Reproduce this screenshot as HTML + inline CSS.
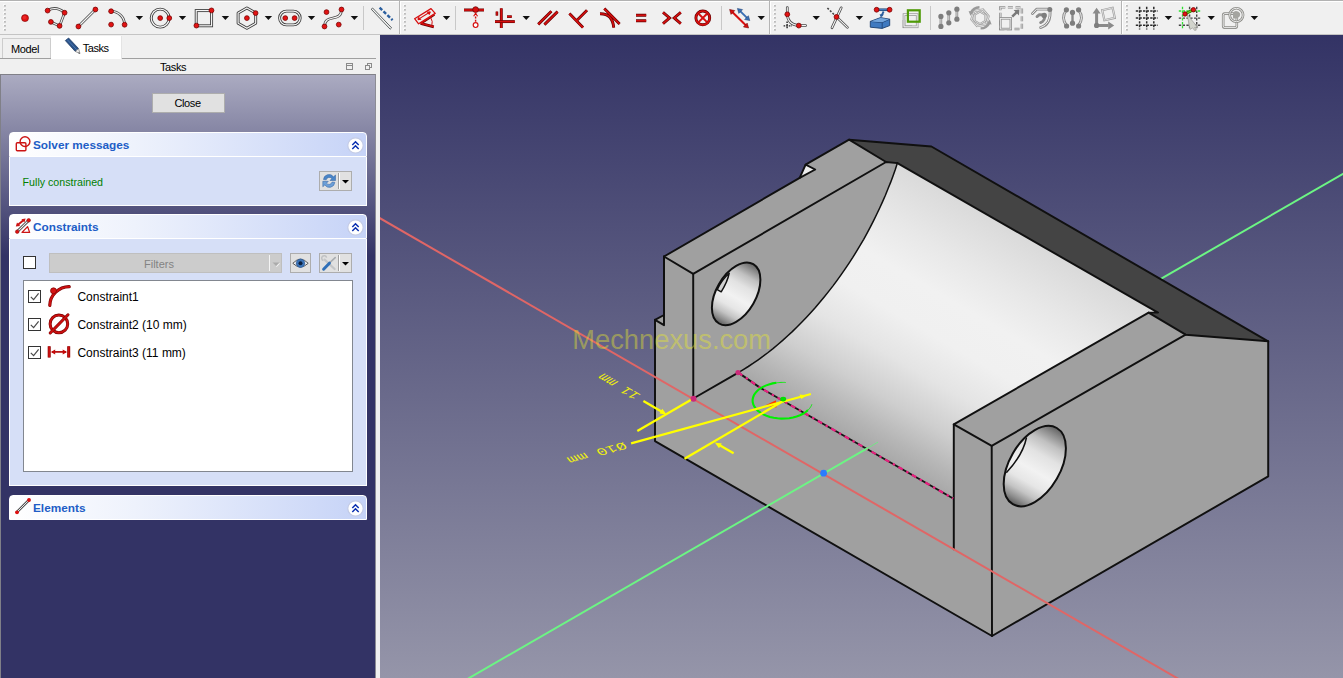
<!DOCTYPE html>
<html><head><meta charset="utf-8"><title>FreeCAD Sketcher</title>
<style>
html,body{margin:0;padding:0}
body{width:1343px;height:678px;overflow:hidden;background:#f0f0f0;position:relative;font-family:"Liberation Sans",sans-serif;font-size:11px;color:#000}
</style></head><body>

<svg id="view" width="963" height="643" viewBox="380 35 963 643" style="position:absolute;left:380px;top:35px;display:block">
<defs>
<linearGradient id="bg" x1="0" y1="35" x2="0" y2="678" gradientUnits="userSpaceOnUse">
<stop offset="0" stop-color="#333365"/><stop offset="1" stop-color="#9595a9"/></linearGradient>
<linearGradient id="cyl" x1="738" y1="372.5" x2="870" y2="147.1" gradientUnits="userSpaceOnUse">
<stop offset="0" stop-color="#a8a8a8"/><stop offset="0.08" stop-color="#b6b6b6"/><stop offset="0.2" stop-color="#cecece"/>
<stop offset="0.35" stop-color="#e4e4e4"/><stop offset="0.5" stop-color="#f0f0f0"/><stop offset="0.65" stop-color="#f1f1f1"/>
<stop offset="0.8" stop-color="#e8e8e8"/><stop offset="1" stop-color="#dadada"/></linearGradient>
<linearGradient id="hg" x1="0" y1="0" x2="1" y2="0">
<stop offset="0" stop-color="#626262"/><stop offset="0.08" stop-color="#8a8a8a"/><stop offset="0.2" stop-color="#c0c0c0"/>
<stop offset="0.35" stop-color="#e2e2e2"/><stop offset="0.55" stop-color="#f2f2f2"/><stop offset="0.7" stop-color="#e6e6e6"/>
<stop offset="0.82" stop-color="#c4c4c4"/><stop offset="0.92" stop-color="#8e8e8e"/><stop offset="1" stop-color="#5a5a5a"/></linearGradient>
</defs>
<rect x="380" y="35" width="963" height="643" fill="url(#bg)"/>
<line x1="1150" y1="285.2" x2="1345" y2="172.7" stroke="#6cf584" stroke-width="2"/>
<polygon points="655.0,319.8 655.0,441.1 992.0,636.0 1268.2,476.4 1268.2,341.3 931.4,146.5 849.1,139.7 805.6,164.7 799.7,177.8 664.0,256.5 664.0,315.0" fill="#a0a0a0"/>
<polygon points="849.1,139.7 931.4,146.5 1268.2,341.3 1185.6,334.7 1148.6,312.6 1158.0,312.6 897.4,163.1 886.1,162.0" fill="#444444"/>
<polygon points="897.4,163.1 895.3,169.5 893.0,176.0 890.6,182.4 888.0,188.8 885.4,195.2 882.6,201.6 879.7,208.0 876.7,214.3 873.6,220.6 870.4,226.9 867.1,233.1 863.7,239.3 860.1,245.4 856.5,251.4 852.8,257.4 848.9,263.3 845.0,269.1 841.0,274.9 836.9,280.6 832.8,286.1 828.5,291.6 824.2,297.0 819.8,302.3 815.4,307.5 810.9,312.5 806.3,317.5 801.7,322.3 797.0,327.0 792.3,331.6 787.5,336.0 782.7,340.4 777.9,344.5 773.0,348.6 768.1,352.5 763.2,356.2 758.2,359.8 753.3,363.2 748.3,366.5 743.3,369.6 738.3,372.6 760.0,387.6 953.2,498.5 953.8,424.4 1148.6,312.6 1158.0,312.6" fill="url(#cyl)"/>
<polygon points="805.6,164.7 815.2,169.5 799.7,177.8" fill="#ededed"/>
<ellipse cx="0" cy="0" rx="34.3" ry="19.8" transform="translate(736.15 293.8) rotate(120)" fill="url(#hg)" stroke="#101010" stroke-width="2"/>
<ellipse cx="0" cy="0" rx="44.0" ry="25.4" transform="translate(1034.8 466.1) rotate(120)" fill="url(#hg)" stroke="#101010" stroke-width="2"/>
<path d="M729.2,273.2 Q727.5,282 721.2,291.8 L717.2,289.6 Q721.5,280 729.2,273.2 Z" fill="#d2d2d2" stroke="#101010" stroke-width="1.5" stroke-linejoin="round"/>
<path d="M1026.5,437.5 Q1023,455 1006.3,472.7" fill="none" stroke="#101010" stroke-width="1.5"/>
<polygon points="655.0,319.8 655.0,441.1 992.0,636.0 1268.2,476.4 1268.2,341.3 931.4,146.5 849.1,139.7 805.6,164.7 799.7,177.8 664.0,256.5 664.0,315.0" fill="none" stroke="#101010" stroke-width="1.95" stroke-linejoin="round" stroke-linecap="round"/>
<polyline points="664.0,256.5 664.0,325.2 655.0,319.8" fill="none" stroke="#101010" stroke-width="1.95" stroke-linejoin="round" stroke-linecap="round"/>
<polyline points="805.6,164.7 815.2,169.5 799.7,177.8" fill="none" stroke="#101010" stroke-width="1.95" stroke-linejoin="round" stroke-linecap="round"/>
<polyline points="664.0,256.5 693.2,273.8 886.1,162.0 897.4,163.1" fill="none" stroke="#101010" stroke-width="1.95" stroke-linejoin="round" stroke-linecap="round"/>
<polyline points="849.1,139.7 886.1,162.0" fill="none" stroke="#101010" stroke-width="1.95" stroke-linejoin="round" stroke-linecap="round"/>
<polyline points="693.2,273.8 693.3,398.5 738.3,372.6" fill="none" stroke="#101010" stroke-width="1.95" stroke-linejoin="round" stroke-linecap="round"/>
<polyline points="897.4,163.1 895.3,169.5 893.0,176.0 890.6,182.4 888.0,188.8 885.4,195.2 882.6,201.6 879.7,208.0 876.7,214.3 873.6,220.6 870.4,226.9 867.1,233.1 863.7,239.3 860.1,245.4 856.5,251.4 852.8,257.4 848.9,263.3 845.0,269.1 841.0,274.9 836.9,280.6 832.8,286.1 828.5,291.6 824.2,297.0 819.8,302.3 815.4,307.5 810.9,312.5 806.3,317.5 801.7,322.3 797.0,327.0 792.3,331.6 787.5,336.0 782.7,340.4 777.9,344.5 773.0,348.6 768.1,352.5 763.2,356.2 758.2,359.8 753.3,363.2 748.3,366.5 743.3,369.6 738.3,372.6" fill="none" stroke="#101010" stroke-width="1.5" stroke-linejoin="round" stroke-linecap="round"/>
<polyline points="897.4,163.1 1158.0,312.6 1148.6,312.6 1185.6,334.7 1268.2,341.3" fill="none" stroke="#101010" stroke-width="1.95" stroke-linejoin="round" stroke-linecap="round"/>
<polyline points="1148.6,312.6 953.8,424.4 991.7,445.9 1185.6,334.7" fill="none" stroke="#101010" stroke-width="1.95" stroke-linejoin="round" stroke-linecap="round"/>
<polyline points="953.8,424.4 953.8,549.3" fill="none" stroke="#101010" stroke-width="1.95" stroke-linejoin="round" stroke-linecap="round"/>
<polyline points="991.7,445.9 992.0,636.0" fill="none" stroke="#101010" stroke-width="1.95" stroke-linejoin="round" stroke-linecap="round"/>
<polyline points="738.3,372.6 760.0,387.6 953.2,498.5" fill="none" stroke="#141414" stroke-width="1.9"/>
<polyline points="738.3,372.6 760.0,387.6 953.2,498.5" fill="none" stroke="#e8207e" stroke-width="2.2" stroke-dasharray="5 4 2.5 4"/>
<line x1="378" y1="217.1" x2="1180" y2="679.8" stroke="#e06666" stroke-width="2"/>
<line x1="465" y1="680.4" x2="868" y2="447.9" stroke="#6cf584" stroke-width="2"/>
<line x1="868" y1="447.9" x2="878" y2="442.1" stroke="#66f27c" stroke-width="0.8"/>
<path d="M776.4,382.8 L772.6,383.4 L768.9,384.4 L765.6,385.6 L762.5,387.1 L759.7,388.8 L757.4,390.7 L755.5,392.8 L754.0,395.0 L753.1,397.3 L752.6,399.7 L752.7,402.0 L753.3,404.4 L754.4,406.7 L756.0,408.8 L758.0,410.9 L760.5,412.7 L763.3,414.4 L766.5,415.8 L770.0,416.9 L773.7,417.8 L777.5,418.3 L781.4,418.6 L785.4,418.5 L789.2,418.2 L793.0,417.5 L796.6,416.5 L800.0,415.3 L803.0,413.8 L805.7,412.0 L808.0,410.1" fill="none" stroke="#00f000" stroke-width="2.1"/>
<path d="M785.7,382.5 L784.6,382.4 L783.4,382.4 L782.2,382.4 L781.0,382.4 L779.9,382.5 L778.7,382.6 L777.5,382.7 L776.4,382.8 M808.0,410.1 L808.7,409.4 L809.3,408.7 L809.9,408.0 L810.4,407.3 L810.9,406.5 L811.3,405.8 L811.6,405.0 L811.9,404.3" fill="none" stroke="#00f000" stroke-width="0.9"/>
<polygon points="765,405.6 776,400.2 776.5,407.6" fill="#ff3a00"/>
<line x1="637.3" y1="431" x2="693.3" y2="398.5" stroke="#ffff00" stroke-width="2.3" stroke-linecap="butt" fill="none"/>
<line x1="684.5" y1="458.7" x2="784.5" y2="400.3" stroke="#ffff00" stroke-width="2.3" stroke-linecap="butt" fill="none"/>
<line x1="631.1" y1="443.3" x2="810.9" y2="394" stroke="#ffff00" stroke-width="2.3" stroke-linecap="butt" fill="none"/>
<line x1="643.4" y1="401" x2="664" y2="413.1" stroke="#ffff00" stroke-width="2.3" stroke-linecap="butt" fill="none"/>
<polygon points="666.5,414.6 659.5,413.4 662.3,408.8" fill="#ffff00"/>
<line x1="733.6" y1="453.2" x2="718" y2="444.2" stroke="#ffff00" stroke-width="2.3" stroke-linecap="butt" fill="none"/>
<polygon points="714.8,442.4 721.8,443.6 719,448.2" fill="#ffff00"/>
<polygon points="806.8,395.2 799.4,394.6 801.4,399" fill="#ffff00"/>
<circle cx="693.5" cy="398.8" r="3" fill="#cc2a7a"/>
<circle cx="738" cy="372.6" r="2.6" fill="#cc2a7a"/>
<ellipse cx="783.2" cy="399.1" rx="3" ry="2.3" fill="#00e000"/>
<circle cx="823.6" cy="473.2" r="3.4" fill="#2a7cff"/>
<text transform="matrix(-0.866 -0.5 0.866 -0.5 641.5 395)" font-family="Liberation Mono, monospace" font-size="14.5" fill="#ffff00" fill-opacity="0.88">11 mm</text>
<text transform="matrix(-1.1064 0.3033 -0.5254 -0.6388 623.5 442)" font-family="Liberation Mono, monospace" font-size="14.5" fill="#ffff00" fill-opacity="0.88">Ø10 mm</text>
<text x="572.3" y="348.8" font-family="Liberation Sans, sans-serif" font-size="27.3" fill="#eaea2c" fill-opacity="0.43">Mechnexus.com</text>
</svg>
<style>
#tabs{position:absolute;left:0;top:35px;width:380px;height:24px;background:#f0f0f0}
#tabs .line{position:absolute;left:0;top:23px;width:376px;height:1px;background:#a0a0a0}
#tab-model{position:absolute;left:2px;top:3px;width:47px;height:19px;border:1px solid #cdcdcd;border-bottom:none;background:#f0f0f0;box-sizing:content-box}
#tab-model span{position:absolute;left:8px;top:3.5px;font-size:11px;line-height:13px;letter-spacing:-0.4px}
#tab-tasks{position:absolute;left:51px;top:1px;width:71px;height:23px;background:#ffffff;border-right:1px solid #e4e4e4;box-sizing:border-box}
#tab-tasks span{position:absolute;left:31.8px;top:6px;font-size:11px;line-height:13px;letter-spacing:-0.5px}
#dock-title{position:absolute;left:0;top:59px;width:376px;height:15px;background:#f0f0f0}
#dock-title span{position:absolute;left:160px;top:1.5px;font-size:11px;line-height:13px;letter-spacing:-0.4px}
#panel{position:absolute;left:0;top:74px;width:376px;height:604px;box-sizing:border-box;border:1px solid #808088;border-bottom:none;border-right-color:#8c8c94;
 background:linear-gradient(to bottom, rgb(171,171,193) 0px, rgb(51,51,101) 181px, rgb(51,51,101) 100%)}
.btn{position:absolute;box-sizing:border-box;border:1px solid #adadad;background:#e1e1e1}
.hdr{position:absolute;left:9px;width:358px;height:25px;box-sizing:border-box;border:1px solid #fff;border-radius:4px 4px 0 0;background:linear-gradient(to right,#ffffff 0%,#eef2fc 35%,#c6d3f7 100%)}
.hdr b{position:absolute;left:23px;top:5px;font-size:11.8px;line-height:14px;color:#215dc6;font-weight:bold;white-space:nowrap}
.hdr .col{position:absolute;left:337px;top:3.5px;width:17px;height:17px}
.bodyb{position:absolute;left:9px;width:358px;box-sizing:border-box;border:1px solid #fff;border-top:none;background:#d6dff7}
.chk{position:absolute;width:13px;height:13px;box-sizing:border-box;border:1px solid #333;background:#fff}
.li{position:absolute;left:77.4px;font-size:12px;line-height:14px;white-space:nowrap}
</style>
<div id="tabs"><div class="line"></div>
 <div id="tab-model"><span>Model</span></div>
 <div id="tab-tasks">
  <svg width="20" height="20" viewBox="62 36 20 20" style="position:absolute;left:11px;top:0px"><g>
   <path d="M65.3,40.6 L68.6,38 L78.6,48.6 L75.2,51.4 Z" fill="#2a5288" stroke="#1a3760" stroke-width="0.7"/>
   <path d="M67,39.4 L77,50" stroke="#4a78b4" stroke-width="1" fill="none"/>
   <path d="M75.2,51.4 L78.6,48.6 L80,53.6 Z" fill="#ececec" stroke="#666" stroke-width="0.6"/>
   <path d="M78.9,52.2 L80,53.6 L78.3,53.2 Z" fill="#222"/>
  </g></svg>
  <span>Tasks</span></div>
</div>
<div id="dock-title"><span>Tasks</span>
 <svg width="30" height="10" viewBox="345 61 30 10" style="position:absolute;left:345px;top:2px">
  <rect x="346.5" y="63.5" width="6" height="6" fill="none" stroke="#8a8a8a" stroke-width="1"/><line x1="346.5" y1="65.5" x2="352.5" y2="65.5" stroke="#8a8a8a"/>
  <rect x="367.5" y="63.5" width="4" height="4" fill="#f0f0f0" stroke="#8a8a8a" stroke-width="1"/><rect x="365.5" y="65.5" width="4" height="4" fill="#f0f0f0" stroke="#8a8a8a" stroke-width="1"/>
 </svg>
</div>
<div id="panel"></div>
<div class="btn" style="left:152px;top:93px;width:73px;height:20px"><span style="position:absolute;left:21.5px;top:3.2px;font-size:11px;line-height:13px;letter-spacing:-0.4px">Close</span></div>

<!-- Solver messages -->
<div class="hdr" style="top:132px">
 <svg width="18" height="18" viewBox="13 134 18 18" style="position:absolute;left:3px;top:1px"><circle cx="25" cy="141.6" r="4.9" fill="none" stroke="#cc1414" stroke-width="1.4"/><rect x="16.3" y="142.8" width="9.6" height="8" rx="1" fill="none" stroke="#cc1414" stroke-width="1.4"/></svg>
 <b>Solver messages</b>
 <svg class="col" viewBox="0 0 17 17"><circle cx="8.5" cy="8.5" r="7.7" fill="#fff" stroke="#c3cbe6" stroke-width="1.2"/><path d="M5.3,8 L8.5,4.8 L11.7,8 M5.3,12 L8.5,8.8 L11.7,12" fill="none" stroke="#0a2fb0" stroke-width="1.5"/></svg>
</div>
<div class="bodyb" style="top:157px;height:49px">
 <span style="position:absolute;left:12.6px;top:19px;font-size:10.65px;line-height:13px;color:#008000;white-space:nowrap">Fully constrained</span>
</div>
<div class="btn" style="left:319px;top:171px;width:33px;height:20px">
 <svg width="31" height="18" viewBox="320 172 31 18" style="position:absolute;left:0;top:0">
  <path d="M323.5,179.5 A5.5,5.5 0 0 1 333.5,176.8 L335.5,175 L335.5,180.5 L330,180.5 L331.8,178.6 A3.2,3.2 0 0 0 326.2,179.8 Z" fill="#4a86c8" stroke="#2f5f9e" stroke-width="0.5"/>
  <path d="M334.8,182.3 A5.5,5.5 0 0 1 324.8,185 L322.8,186.8 L322.8,181.3 L328.3,181.3 L326.5,183.2 A3.2,3.2 0 0 0 332.1,182 Z" fill="#6da0d8" stroke="#2f5f9e" stroke-width="0.5"/>
  <line x1="339.5" y1="173" x2="339.5" y2="189" stroke="#fff" stroke-width="1"/><line x1="338.5" y1="173" x2="338.5" y2="189" stroke="#a0a0a0" stroke-width="1"/>
  <path d="M342,180 L349,180 L345.5,183.6 Z" fill="#000"/>
 </svg>
</div>

<!-- Constraints -->
<div class="hdr" style="top:214px">
 <svg width="18" height="18" viewBox="13 216 18 18" style="position:absolute;left:3px;top:1px">
  <path d="M17.3,231.6 L28.6,220.4" stroke="#444" stroke-width="2.8" stroke-linecap="round"/><path d="M17.3,231.6 L28.6,220.4" stroke="#f4f4f4" stroke-width="1.1" stroke-linecap="round"/>
  <path d="M17.4,225.2 L24,219.8" stroke="#cc1414" stroke-width="1.9"/><path d="M15.8,226.6 L17,222.6 L20.2,226 Z M25.6,218.6 L24.4,222.4 L21.4,219.2 Z" fill="#cc1414"/>
  <path d="M22,232.4 L29.6,232.4 L27.6,226.6 Z" fill="none" stroke="#cc1414" stroke-width="1.3" stroke-linejoin="round"/>
  <circle cx="17.2" cy="231.7" r="1.8" fill="#e01010" stroke="#8a0000" stroke-width="0.5"/><circle cx="28.7" cy="220.3" r="1.8" fill="#e01010" stroke="#8a0000" stroke-width="0.5"/>
 </svg>
 <b>Constraints</b>
 <svg class="col" viewBox="0 0 17 17"><circle cx="8.5" cy="8.5" r="7.7" fill="#fff" stroke="#c3cbe6" stroke-width="1.2"/><path d="M5.3,8 L8.5,4.8 L11.7,8 M5.3,12 L8.5,8.8 L11.7,12" fill="none" stroke="#0a2fb0" stroke-width="1.5"/></svg>
</div>
<div class="bodyb" style="top:239px;height:247px"></div>
<div class="chk" style="left:23px;top:256px"></div>
<div style="position:absolute;left:49px;top:253px;width:233px;height:20px;box-sizing:border-box;border:1px solid #bfbfbf;background:#cccccc">
 <span style="position:absolute;left:94px;top:3.8px;font-size:11px;line-height:13px;color:#838383">Filters</span>
 <div style="position:absolute;left:218.5px;top:1px;width:1px;height:16px;background:#f4f4f4"></div>
 <svg width="9" height="6" viewBox="0 0 9 6" style="position:absolute;left:221.5px;top:8px"><path d="M1.2,1.2 L8.2,1.2 L4.7,5 Z" fill="#f4f4f4"/><path d="M0.5,0.5 L7.5,0.5 L4,4.3 Z" fill="#ababab"/></svg>
</div>
<div class="btn" style="left:290px;top:253px;width:21px;height:20px">
 <svg width="19" height="18" viewBox="0 0 19 18" style="position:absolute;left:0;top:0"><path d="M1.8,9.3 Q9.4,1.2 17.2,9.3 Q9.4,16.6 1.8,9.3 Z" fill="#f8f8f8" stroke="#555" stroke-width="1"/><circle cx="9.5" cy="9.2" r="4.3" fill="#3c74b8" stroke="#274f86" stroke-width="0.6"/><circle cx="9.5" cy="9.2" r="2" fill="#0c2040"/></svg>
</div>
<div class="btn" style="left:319px;top:253px;width:33px;height:20px">
 <svg width="31" height="18" viewBox="320 254 31 18" style="position:absolute;left:0;top:0">
  <path d="M324.6,259.6 L334.6,269" stroke="#c4c6c8" stroke-width="2.2" stroke-linecap="round"/>
  <path d="M323.4,260.6 a2.5,2.5 0 1 1 3.2,-3" fill="none" stroke="#c0c2c4" stroke-width="1.5"/>
  <path d="M329,263.4 L335.2,257.6" stroke="#a8acb0" stroke-width="1.6" stroke-linecap="round"/>
  <path d="M323.6,269.2 L329.4,263.2" stroke="#2f6fb8" stroke-width="3" stroke-linecap="round"/>
  <line x1="339.5" y1="255" x2="339.5" y2="271" stroke="#fff" stroke-width="1"/><line x1="338.5" y1="255" x2="338.5" y2="271" stroke="#a0a0a0" stroke-width="1"/>
  <path d="M342,262 L349,262 L345.5,265.6 Z" fill="#000"/>
 </svg>
</div>
<div style="position:absolute;left:23px;top:280px;width:330px;height:192px;box-sizing:border-box;border:1px solid #828790;background:#fff"></div>
<div class="chk" style="left:28px;top:290px"></div><div class="chk" style="left:28px;top:318px"></div><div class="chk" style="left:28px;top:346px"></div>
<svg width="60" height="90" viewBox="26 284 60 90" style="position:absolute;left:26px;top:284px">
 <g fill="none" stroke="#4a4a4a" stroke-width="1.2"><path d="M30.8,296.8 L33.6,299.6 L38.6,293.4"/><path d="M30.8,324.8 L33.6,327.6 L38.6,321.4"/><path d="M30.8,352.8 L33.6,355.6 L38.6,349.4"/></g>
 <!-- constraint1 icon: arc with point -->
 <path d="M49.8,305.4 A19.6,19.2 0 0 1 69.2,286.7" fill="none" stroke="#7a0000" stroke-width="3.2" stroke-linecap="round"/>
 <path d="M49.8,305.4 A19.6,19.2 0 0 1 69.2,286.7" fill="none" stroke="#cc1010" stroke-width="2.1" stroke-linecap="round"/>
 <circle cx="53.5" cy="290.8" r="3" fill="#d41414" stroke="#7a0000" stroke-width="0.7"/>
 <!-- constraint2 icon: diameter -->
 <circle cx="58.9" cy="323.9" r="8.8" fill="none" stroke="#7a0000" stroke-width="3"/>
 <circle cx="58.9" cy="323.9" r="8.8" fill="none" stroke="#cc1010" stroke-width="1.9"/>
 <path d="M50.2,333 L68,314.8" stroke="#7a0000" stroke-width="3" stroke-linecap="round"/>
 <path d="M50.2,333 L68,314.8" stroke="#cc1010" stroke-width="1.9" stroke-linecap="round"/>
 <!-- constraint3 icon: horizontal distance -->
 <path d="M49.2,346.2 L49.2,357.6 M68.7,346.2 L68.7,357.6" stroke="#8a0000" stroke-width="3"/>
 <path d="M49.2,346.6 L49.2,357.2 M68.7,346.6 L68.7,357.2" stroke="#cc1010" stroke-width="1.8"/>
 <path d="M52,351.9 L66,351.9" stroke="#b40808" stroke-width="1.7"/>
 <path d="M50.8,351.9 L55.2,349.4 L55.2,354.4 Z M67.1,351.9 L62.7,349.4 L62.7,354.4 Z" fill="#c40a0a"/>
</svg>
<span class="li" style="top:290px">Constraint1</span>
<span class="li" style="top:318px">Constraint2 (10 mm)</span>
<span class="li" style="top:346px">Constraint3 (11 mm)</span>

<!-- Elements -->
<div class="hdr" style="top:495px;border-radius:4px 4px 0 0">
 <svg width="18" height="18" viewBox="13 497 18 18" style="position:absolute;left:3px;top:1px">
  <path d="M17,512 L29,500" stroke="#555" stroke-width="2.6" stroke-linecap="round"/><path d="M17,512 L29,500" stroke="#e8e8e8" stroke-width="1" stroke-linecap="round"/>
  <circle cx="17" cy="512.3" r="1.9" fill="#e01010"/><circle cx="29" cy="500" r="1.9" fill="#e01010"/>
 </svg>
 <b>Elements</b>
 <svg class="col" viewBox="0 0 17 17"><circle cx="8.5" cy="8.5" r="7.7" fill="#fff" stroke="#c3cbe6" stroke-width="1.2"/><path d="M5.3,8 L8.5,4.8 L11.7,8 M5.3,12 L8.5,8.8 L11.7,12" fill="none" stroke="#0a2fb0" stroke-width="1.5"/></svg>
</div>

<svg id="toolbar" width="1343" height="35" viewBox="0 0 1343 35" style="position:absolute;left:0;top:0;display:block">
<rect x="0" y="0" width="1343" height="35" fill="#f0f0f0"/>
<rect x="0" y="0" width="1343" height="1" fill="#b2b2b2"/><rect x="0" y="1" width="1343" height="1" fill="#ffffff"/>
<rect x="0" y="34" width="1343" height="1" fill="#c4c4c4"/>
<rect x="3.3" y="4.2" width="1.8" height="1.8" fill="#ffffff"/><rect x="4.1" y="5" width="1.7" height="1.7" fill="#b4b4b4"/><rect x="3.3" y="8.2" width="1.8" height="1.8" fill="#ffffff"/><rect x="4.1" y="9" width="1.7" height="1.7" fill="#b4b4b4"/><rect x="3.3" y="12.2" width="1.8" height="1.8" fill="#ffffff"/><rect x="4.1" y="13" width="1.7" height="1.7" fill="#b4b4b4"/><rect x="3.3" y="16.2" width="1.8" height="1.8" fill="#ffffff"/><rect x="4.1" y="17" width="1.7" height="1.7" fill="#b4b4b4"/><rect x="3.3" y="20.2" width="1.8" height="1.8" fill="#ffffff"/><rect x="4.1" y="21" width="1.7" height="1.7" fill="#b4b4b4"/><rect x="3.3" y="24.2" width="1.8" height="1.8" fill="#ffffff"/><rect x="4.1" y="25" width="1.7" height="1.7" fill="#b4b4b4"/><rect x="3.3" y="28.2" width="1.8" height="1.8" fill="#ffffff"/><rect x="4.1" y="29" width="1.7" height="1.7" fill="#b4b4b4"/>
<circle cx="25" cy="18.1" r="3.5" fill="#e21313" stroke="#7a0000" stroke-width="0.6"/><circle cx="24.5" cy="17.4" r="1.7" fill="#f03030" opacity="0.7"/>
<path d="M47.6,10.6 Q56,5.5 64.6,12.75 L59.6,25.9 L50.9,21.9" fill="none" stroke="#4a4a4a" stroke-width="2.7" stroke-linecap="round"/><path d="M47.6,10.6 Q56,5.5 64.6,12.75 L59.6,25.9 L50.9,21.9" fill="none" stroke="#f6f6f6" stroke-width="1.1" stroke-linecap="round"/>
<circle cx="47.6" cy="10.6" r="2.4" fill="#e21313" stroke="#7a0000" stroke-width="0.8"/><circle cx="64.6" cy="12.75" r="2.4" fill="#e21313" stroke="#7a0000" stroke-width="0.8"/><circle cx="50.9" cy="21.9" r="2.4" fill="#e21313" stroke="#7a0000" stroke-width="0.8"/><circle cx="59.6" cy="25.9" r="2.4" fill="#e21313" stroke="#7a0000" stroke-width="0.8"/>
<path d="M78.4,26.5 L95.4,9.5" fill="none" stroke="#4a4a4a" stroke-width="2.7" stroke-linecap="round"/><path d="M78.4,26.5 L95.4,9.5" fill="none" stroke="#f6f6f6" stroke-width="1.1" stroke-linecap="round"/>
<circle cx="78.4" cy="26.5" r="2.4" fill="#e21313" stroke="#7a0000" stroke-width="0.8"/><circle cx="95.4" cy="9.5" r="2.4" fill="#e21313" stroke="#7a0000" stroke-width="0.8"/>
<path d="M111.1,11.25 A13.5,13.5 0 0 1 124.6,24.75" fill="none" stroke="#4a4a4a" stroke-width="2.7" stroke-linecap="round"/><path d="M111.1,11.25 A13.5,13.5 0 0 1 124.6,24.75" fill="none" stroke="#f6f6f6" stroke-width="1.1" stroke-linecap="round"/>
<circle cx="111.1" cy="11.25" r="2.4" fill="#e21313" stroke="#7a0000" stroke-width="0.8"/><circle cx="111.1" cy="24.6" r="2.4" fill="#e21313" stroke="#7a0000" stroke-width="0.8"/><circle cx="124.6" cy="24.75" r="2.4" fill="#e21313" stroke="#7a0000" stroke-width="0.8"/>
<path d="M135.70000000000002,15.899999999999999 L143.1,15.899999999999999 L139.4,20.099999999999998 Z" fill="#111"/>
<circle cx="160.2" cy="18.1" r="9" fill="none" stroke="#3a3a3a" stroke-width="2.9"/><circle cx="160.2" cy="18.1" r="9" fill="none" stroke="#f6f6f6" stroke-width="1.2"/>
<circle cx="160.2" cy="18.1" r="2.4" fill="#e21313" stroke="#7a0000" stroke-width="0.8"/><circle cx="169.3" cy="18.1" r="2.4" fill="#e21313" stroke="#7a0000" stroke-width="0.8"/>
<path d="M178.8,15.899999999999999 L186.2,15.899999999999999 L182.5,20.099999999999998 Z" fill="#111"/>
<rect x="196.2" y="10.6" width="15.4" height="15.2" fill="none" stroke="#3a3a3a" stroke-width="2.9"/><rect x="196.2" y="10.6" width="15.4" height="15.2" fill="none" stroke="#f6f6f6" stroke-width="1.2"/>
<circle cx="211.5" cy="10.4" r="2.4" fill="#e21313" stroke="#7a0000" stroke-width="0.8"/><circle cx="196.4" cy="25.6" r="2.4" fill="#e21313" stroke="#7a0000" stroke-width="0.8"/>
<path d="M221.70000000000002,15.899999999999999 L229.1,15.899999999999999 L225.4,20.099999999999998 Z" fill="#111"/>
<polygon points="246.9,7.9 255.7,13.0 255.7,23.2 246.9,28.3 238.1,23.2 238.1,13.0" fill="none" stroke="#3a3a3a" stroke-width="2.9" stroke-linejoin="round"/><polygon points="246.9,7.9 255.7,13.0 255.7,23.2 246.9,28.3 238.1,23.2 238.1,13.0" fill="none" stroke="#f6f6f6" stroke-width="1.2"/>
<circle cx="246.9" cy="18.1" r="2.4" fill="#e21313" stroke="#7a0000" stroke-width="0.8"/><circle cx="255.6" cy="13.1" r="2.4" fill="#e21313" stroke="#7a0000" stroke-width="0.8"/>
<path d="M264.7,15.899999999999999 L272.09999999999997,15.899999999999999 L268.4,20.099999999999998 Z" fill="#111"/>
<rect x="279.6" y="11.1" width="20.6" height="13.8" rx="6.9" fill="none" stroke="#3a3a3a" stroke-width="2.9"/><rect x="279.6" y="11.1" width="20.6" height="13.8" rx="6.9" fill="none" stroke="#f6f6f6" stroke-width="1.2"/>
<circle cx="285.25" cy="18.1" r="2.4" fill="#e21313" stroke="#7a0000" stroke-width="0.8"/><circle cx="294.6" cy="18.1" r="2.4" fill="#e21313" stroke="#7a0000" stroke-width="0.8"/>
<path d="M307.8,15.899999999999999 L315.2,15.899999999999999 L311.5,20.099999999999998 Z" fill="#111"/>
<path d="M324.5,26.5 C324.5,13 341.5,23 341.5,9.5" fill="none" stroke="#4a4a4a" stroke-width="2.7" stroke-linecap="round"/><path d="M324.5,26.5 C324.5,13 341.5,23 341.5,9.5" fill="none" stroke="#f6f6f6" stroke-width="1.1" stroke-linecap="round"/>
<circle cx="326.5" cy="12.1" r="2.4" fill="#e21313" stroke="#7a0000" stroke-width="0.8"/><circle cx="341.5" cy="9.5" r="2.4" fill="#e21313" stroke="#7a0000" stroke-width="0.8"/><circle cx="324.5" cy="26.5" r="2.4" fill="#e21313" stroke="#7a0000" stroke-width="0.8"/><circle cx="338.75" cy="24.6" r="2.4" fill="#e21313" stroke="#7a0000" stroke-width="0.8"/>
<path d="M350.7,15.899999999999999 L358.09999999999997,15.899999999999999 L354.4,20.099999999999998 Z" fill="#111"/>
<line x1="363.5" y1="6" x2="363.5" y2="30" stroke="#c8c8c8" stroke-width="1"/>
<path d="M371.2,9.2 L372.6,8 L391.6,27.8 L390.2,29.2 Z" fill="#f6f6f6" stroke="#4a5050" stroke-width="0.9"/>
<path d="M379.6,7.7 L392.6,20.2" stroke="#2b5f9e" stroke-width="2.4" stroke-dasharray="3.6 1.8" fill="none"/>
<rect x="399" y="1" width="1" height="33" fill="#b4b4b4"/><rect x="400" y="2" width="1" height="32" fill="#ffffff"/>
<rect x="403.3" y="4.2" width="1.8" height="1.8" fill="#ffffff"/><rect x="404.1" y="5" width="1.7" height="1.7" fill="#b4b4b4"/><rect x="403.3" y="8.2" width="1.8" height="1.8" fill="#ffffff"/><rect x="404.1" y="9" width="1.7" height="1.7" fill="#b4b4b4"/><rect x="403.3" y="12.2" width="1.8" height="1.8" fill="#ffffff"/><rect x="404.1" y="13" width="1.7" height="1.7" fill="#b4b4b4"/><rect x="403.3" y="16.2" width="1.8" height="1.8" fill="#ffffff"/><rect x="404.1" y="17" width="1.7" height="1.7" fill="#b4b4b4"/><rect x="403.3" y="20.2" width="1.8" height="1.8" fill="#ffffff"/><rect x="404.1" y="21" width="1.7" height="1.7" fill="#b4b4b4"/><rect x="403.3" y="24.2" width="1.8" height="1.8" fill="#ffffff"/><rect x="404.1" y="25" width="1.7" height="1.7" fill="#b4b4b4"/><rect x="403.3" y="28.2" width="1.8" height="1.8" fill="#ffffff"/><rect x="404.1" y="29" width="1.7" height="1.7" fill="#b4b4b4"/>
<path d="M420.6,23.3 L434.2,14.4 M420.6,23.3 L433.8,26.8" fill="none" stroke="#640000" stroke-width="2.9" stroke-linecap="butt" stroke-linejoin="miter"/><path d="M420.6,23.3 L434.2,14.4 M420.6,23.3 L433.8,26.8" fill="none" stroke="#d60f0f" stroke-width="1.6" stroke-linecap="butt" stroke-linejoin="miter"/>
<path d="M414.6,18.7 L431,8.6 L435.2,13.4 L418.6,23.8 Z" fill="#f0f0f0" stroke="#d60f0f" stroke-width="1.3" stroke-linejoin="round"/>
<path d="M417.8,19.6 L430.4,11.8 M417.8,19.6 l3.4,-0.4 M417.8,19.6 l1.4,-3 M430.4,11.8 l-3.4,0.4 M430.4,11.8 l-1.4,3" fill="none" stroke="#d60f0f" stroke-width="1.1"/>
<path d="M430.6,17.4 Q433.2,21.4 431.8,25.6" fill="none" stroke="#d60f0f" stroke-width="1"/>
<path d="M442.8,15.899999999999999 L450.2,15.899999999999999 L446.5,20.099999999999998 Z" fill="#111"/>
<line x1="455.5" y1="6" x2="455.5" y2="30" stroke="#c8c8c8" stroke-width="1"/>
<path d="M464,10 L484,10" fill="none" stroke="#640000" stroke-width="3.0" stroke-linecap="butt" stroke-linejoin="miter"/><path d="M464,10 L484,10" fill="none" stroke="#d60f0f" stroke-width="1.7" stroke-linecap="butt" stroke-linejoin="miter"/>
<circle cx="475.6" cy="9.6" r="2.9" fill="#d60f0f" stroke="#640000" stroke-width="0.7"/>
<path d="M475.6,13 L475.6,22" stroke="#d60f0f" stroke-width="1.4" stroke-dasharray="2 1.4"/><path d="M473.6,16.2 L475.6,13.4 L477.6,16.2" fill="none" stroke="#d60f0f" stroke-width="1.1"/>
<circle cx="475.6" cy="25.1" r="2.4" fill="#fff" stroke="#d60f0f" stroke-width="1.2"/>
<path d="M501.3,8.3 L501.3,28" fill="none" stroke="#640000" stroke-width="2.9" stroke-linecap="butt" stroke-linejoin="miter"/><path d="M501.3,8.3 L501.3,28" fill="none" stroke="#d60f0f" stroke-width="1.6" stroke-linecap="butt" stroke-linejoin="miter"/><path d="M495,21.6 L514.8,21.6" fill="none" stroke="#640000" stroke-width="2.9" stroke-linecap="butt" stroke-linejoin="miter"/><path d="M495,21.6 L514.8,21.6" fill="none" stroke="#d60f0f" stroke-width="1.6" stroke-linecap="butt" stroke-linejoin="miter"/><path d="M496.9,11.6 L496.9,15.6" fill="none" stroke="#640000" stroke-width="2.6" stroke-linecap="butt" stroke-linejoin="miter"/><path d="M496.9,11.6 L496.9,15.6" fill="none" stroke="#d60f0f" stroke-width="1.4" stroke-linecap="butt" stroke-linejoin="miter"/><path d="M507,16.6 L511.8,16.6" fill="none" stroke="#640000" stroke-width="2.6" stroke-linecap="butt" stroke-linejoin="miter"/><path d="M507,16.6 L511.8,16.6" fill="none" stroke="#d60f0f" stroke-width="1.4" stroke-linecap="butt" stroke-linejoin="miter"/>
<path d="M522.55,15.899999999999999 L529.95,15.899999999999999 L526.25,20.099999999999998 Z" fill="#111"/>
<path d="M538.2,24.4 L551.4,11.2 M544.4,24.6 L557.6,11.6" fill="none" stroke="#640000" stroke-width="2.9" stroke-linecap="butt" stroke-linejoin="miter"/><path d="M538.2,24.4 L551.4,11.2 M544.4,24.6 L557.6,11.6" fill="none" stroke="#d60f0f" stroke-width="1.6" stroke-linecap="butt" stroke-linejoin="miter"/>
<path d="M569.4,13.6 L583,27.6 M577,20.2 L587,10.3" fill="none" stroke="#640000" stroke-width="2.9" stroke-linecap="butt" stroke-linejoin="miter"/><path d="M569.4,13.6 L583,27.6 M577,20.2 L587,10.3" fill="none" stroke="#d60f0f" stroke-width="1.6" stroke-linecap="butt" stroke-linejoin="miter"/>
<path d="M604.3,8.6 L619.6,24 M600,13.8 Q612.5,13.5 613.7,27.6" fill="none" stroke="#640000" stroke-width="2.9" stroke-linecap="butt" stroke-linejoin="miter"/><path d="M604.3,8.6 L619.6,24 M600,13.8 Q612.5,13.5 613.7,27.6" fill="none" stroke="#d60f0f" stroke-width="1.6" stroke-linecap="butt" stroke-linejoin="miter"/>
<path d="M636,15.3 L646.2,15.3 M636,20.7 L646.2,20.7" fill="none" stroke="#640000" stroke-width="2.9" stroke-linecap="butt" stroke-linejoin="miter"/><path d="M636,15.3 L646.2,15.3 M636,20.7 L646.2,20.7" fill="none" stroke="#d60f0f" stroke-width="1.6" stroke-linecap="butt" stroke-linejoin="miter"/>
<path d="M663,12.4 L669.6,17.9 L663,23.6 M680.8,12.4 L674.2,17.9 L680.8,23.6" fill="none" stroke="#640000" stroke-width="2.9" stroke-linecap="butt" stroke-linejoin="miter"/><path d="M663,12.4 L669.6,17.9 L663,23.6 M680.8,12.4 L674.2,17.9 L680.8,23.6" fill="none" stroke="#d60f0f" stroke-width="1.6" stroke-linecap="butt" stroke-linejoin="miter"/>
<circle cx="702.8" cy="17.9" r="6.9" fill="none" stroke="#640000" stroke-width="2.9"/><circle cx="702.8" cy="17.9" r="6.9" fill="none" stroke="#d60f0f" stroke-width="1.7"/>
<path d="M698.6,13.7 L707,22.1 M707,13.7 L698.6,22.1" stroke="#d60f0f" stroke-width="2" fill="none"/>
<line x1="721.5" y1="6" x2="721.5" y2="30" stroke="#c8c8c8" stroke-width="1"/>
<path d="M731.5,11.2 L746.8,26.3" stroke="#d60f0f" stroke-width="2" fill="none"/><path d="M729.6,9.4 L734.8,10.6 L731,14.4 Z M748.6,28 L743.4,26.9 L747.2,23.1 Z" fill="#d60f0f" stroke="#640000" stroke-width="0.5"/>
<path d="M739.4,10.4 L747.8,18.6" stroke="#3a6fb4" stroke-width="2" fill="none"/><path d="M737.4,8.4 L742.6,9.6 L738.8,13.4 Z M749.8,20.6 L744.6,19.5 L748.4,15.7 Z" fill="#3a6fb4" stroke="#1f3f70" stroke-width="0.5"/>
<path d="M757.55,15.899999999999999 L764.95,15.899999999999999 L761.25,20.099999999999998 Z" fill="#111"/>
<rect x="769" y="1" width="1" height="33" fill="#b4b4b4"/><rect x="770" y="2" width="1" height="32" fill="#ffffff"/>
<rect x="773.3" y="4.2" width="1.8" height="1.8" fill="#ffffff"/><rect x="774.1" y="5" width="1.7" height="1.7" fill="#b4b4b4"/><rect x="773.3" y="8.2" width="1.8" height="1.8" fill="#ffffff"/><rect x="774.1" y="9" width="1.7" height="1.7" fill="#b4b4b4"/><rect x="773.3" y="12.2" width="1.8" height="1.8" fill="#ffffff"/><rect x="774.1" y="13" width="1.7" height="1.7" fill="#b4b4b4"/><rect x="773.3" y="16.2" width="1.8" height="1.8" fill="#ffffff"/><rect x="774.1" y="17" width="1.7" height="1.7" fill="#b4b4b4"/><rect x="773.3" y="20.2" width="1.8" height="1.8" fill="#ffffff"/><rect x="774.1" y="21" width="1.7" height="1.7" fill="#b4b4b4"/><rect x="773.3" y="24.2" width="1.8" height="1.8" fill="#ffffff"/><rect x="774.1" y="25" width="1.7" height="1.7" fill="#b4b4b4"/><rect x="773.3" y="28.2" width="1.8" height="1.8" fill="#ffffff"/><rect x="774.1" y="29" width="1.7" height="1.7" fill="#b4b4b4"/>
<path d="M787.3,7.6 L787.3,14.2 Q787.8,24.6 798.8,25.6 L805.6,25.6" fill="none" stroke="#4a4a4a" stroke-width="2.7" stroke-linecap="round"/><path d="M787.3,7.6 L787.3,14.2 Q787.8,24.6 798.8,25.6 L805.6,25.6" fill="none" stroke="#f6f6f6" stroke-width="1.1" stroke-linecap="round"/>
<circle cx="787.3" cy="14.3" r="2.4" fill="#e21313" stroke="#7a0000" stroke-width="0.8"/><circle cx="798.8" cy="25.6" r="2.4" fill="#e21313" stroke="#7a0000" stroke-width="0.8"/>
<path d="M787.1,21.5 L787.1,29.2 M783.6,25.9 L792,25.9" stroke="#222" stroke-width="1.4" stroke-dasharray="1.6 1"/>
<path d="M812.55,15.899999999999999 L819.95,15.899999999999999 L816.25,20.099999999999998 Z" fill="#111"/>
<path d="M841.2,7.8 L832,27.8" fill="none" stroke="#4a4a4a" stroke-width="2.7" stroke-linecap="round"/><path d="M841.2,7.8 L832,27.8" fill="none" stroke="#f6f6f6" stroke-width="1.1" stroke-linecap="round"/>
<path d="M836.5,16.9 L847.4,27.4" fill="none" stroke="#4a4a4a" stroke-width="2.7" stroke-linecap="round"/><path d="M836.5,16.9 L847.4,27.4" fill="none" stroke="#f6f6f6" stroke-width="1.1" stroke-linecap="round"/>
<path d="M827.4,8 L834.5,15" stroke="#444" stroke-width="1.6" stroke-dasharray="2 1.6" fill="none"/>
<circle cx="836.5" cy="16.9" r="2.4" fill="#e21313" stroke="#7a0000" stroke-width="0.8"/>
<path d="M855.6999999999999,15.899999999999999 L863.1,15.899999999999999 L859.4,20.099999999999998 Z" fill="#111"/>
<path d="M870.3,21.4 L880.5,17.6 L889.7,19.2 L889.7,25.6 L882.2,28.4 L870.3,27.2 Z" fill="#3f7ac0" stroke="#1c3f6e" stroke-width="0.9" stroke-linejoin="round"/>
<path d="M870.3,21.4 L882.2,22.6 L889.7,19.2 M882.2,22.6 L882.2,28.4" fill="none" stroke="#1c3f6e" stroke-width="0.8"/><path d="M870.8,21.6 L880.5,18 L889,19.3 L882.2,22.2 Z" fill="#74a6dc"/>
<path d="M876.6,9.75 L889.6,9.75" stroke="#1c3f6e" stroke-width="2.6"/><path d="M876.6,9.75 L889.6,9.75" stroke="#4c86c8" stroke-width="1.2"/>
<path d="M883.6,11.5 L881.4,16" stroke="#2b5f9e" stroke-width="1.8"/><path d="M879.6,14.2 L884,14.6 L880.8,17.4 Z" fill="#2b5f9e"/>
<circle cx="876.6" cy="9.75" r="2.4" fill="#e21313" stroke="#7a0000" stroke-width="0.8"/><circle cx="889.6" cy="9.75" r="2.4" fill="#e21313" stroke="#7a0000" stroke-width="0.8"/>
<rect x="904" y="14.6" width="13.2" height="12.2" fill="none" stroke="#9a9a9a" stroke-width="2.6"/><rect x="904" y="14.6" width="13.2" height="12.2" fill="none" stroke="#f4f4f4" stroke-width="1"/>
<rect x="907.9" y="10.3" width="11.8" height="11.4" fill="none" stroke="#4e9a06" stroke-width="2.2"/>
<path d="M904,20 L904,26.8 L912,26.8" fill="none" stroke="#9a9a9a" stroke-width="2.6"/><path d="M904,20 L904,26.8 L912,26.8" fill="none" stroke="#f4f4f4" stroke-width="1"/>
<line x1="930.5" y1="6" x2="930.5" y2="30" stroke="#c8c8c8" stroke-width="1"/>
<path d="M940.9,16.4 L940.9,26.4" stroke="#8a8a8a" stroke-width="2.6"/><path d="M940.9,16.4 L940.9,26.4" stroke="#e4e4e4" stroke-width="0.9"/><circle cx="940.9" cy="16.4" r="2.6" fill="#7d7d7d"/><circle cx="940.9" cy="26.4" r="2.6" fill="#7d7d7d"/>
<path d="M948.8,12.8 L948.8,22.8" stroke="#8a8a8a" stroke-width="2.6"/><path d="M948.8,12.8 L948.8,22.8" stroke="#e4e4e4" stroke-width="0.9"/><circle cx="948.8" cy="12.8" r="2.6" fill="#7d7d7d"/><circle cx="948.8" cy="22.8" r="2.6" fill="#7d7d7d"/>
<path d="M956.9,9.2 L956.9,19.2" stroke="#8a8a8a" stroke-width="2.6"/><path d="M956.9,9.2 L956.9,19.2" stroke="#e4e4e4" stroke-width="0.9"/><circle cx="956.9" cy="9.2" r="2.6" fill="#7d7d7d"/><circle cx="956.9" cy="19.2" r="2.6" fill="#7d7d7d"/>
<polygon points="983.0,9.5 988.7,16.3 985.7,24.5 977.0,26.1 971.3,19.3 974.3,11.1" fill="none" stroke="#a4a4a4" stroke-width="2.2"/><polygon points="983.0,9.5 988.7,16.3 985.7,24.5 977.0,26.1 971.3,19.3 974.3,11.1" fill="none" stroke="#f0f0f0" stroke-width="0.8"/>
<polygon points="980.0,11.6 985.4,14.7 985.4,20.9 980.0,24.0 974.6,20.9 974.6,14.7" fill="none" stroke="#9a9a9a" stroke-width="2"/><polygon points="980.0,11.6 985.4,14.7 985.4,20.9 980.0,24.0 974.6,20.9 974.6,14.7" fill="none" stroke="#f0f0f0" stroke-width="0.7"/>
<path d="M970.6,13 A10.5,10.5 0 0 1 979.5,7.2" fill="none" stroke="#9a9a9a" stroke-width="2.4"/><path d="M968.6,11 L973.6,12 L970.4,15.8 Z" fill="#9a9a9a"/>
<path d="M989.6,22.4 A10.5,10.5 0 0 1 980.6,28.4" fill="none" stroke="#9a9a9a" stroke-width="2.4"/><path d="M991.6,24.4 L986.6,23.4 L989.8,19.6 Z" fill="#9a9a9a"/>
<rect x="1000.3" y="7.4" width="21.6" height="21.6" fill="none" stroke="#8a8a8a" stroke-width="2.4" stroke-dasharray="5 2.6"/><rect x="1000.3" y="7.4" width="21.6" height="21.6" fill="none" stroke="#f0f0f0" stroke-width="0.8" stroke-dasharray="5 2.6"/>
<rect x="1000.4" y="18.4" width="10.4" height="10.6" fill="#f0f0f0" stroke="#8a8a8a" stroke-width="2.4"/><rect x="1000.4" y="18.4" width="10.4" height="10.6" fill="none" stroke="#f0f0f0" stroke-width="0.8"/>
<path d="M1012.2,16.6 L1017.4,11.6" stroke="#7a7a7a" stroke-width="2.6"/><path d="M1019.4,9.6 L1019,15.4 L1013.6,10 Z" fill="#7a7a7a"/>
<path d="M1032.4,13.6 L1036.6,9.2 L1050,9.2 Q1051.4,24.6 1040.6,27.6" fill="none" stroke="#8a8a8a" stroke-width="2.8" stroke-linecap="round" stroke-linejoin="round"/><path d="M1032.4,13.6 L1036.6,9.2 L1050,9.2 Q1051.4,24.6 1040.6,27.6" fill="none" stroke="#f0f0f0" stroke-width="1" stroke-linecap="round" stroke-linejoin="round"/>
<path d="M1037,16.6 L1039.4,14.6 L1044.6,14.8 Q1045.4,21 1040.6,22.6" fill="none" stroke="#8a8a8a" stroke-width="2.8" stroke-linecap="round" stroke-linejoin="round"/>
<circle cx="1049.8" cy="9.4" r="2.5" fill="#7d7d7d"/><circle cx="1044.2" cy="15.4" r="2.7" fill="#7d7d7d"/>
<path d="M1066.4,10 Q1060.6,17.6 1066.6,25.8 M1078.6,10 Q1084.4,17.6 1078.4,25.8" fill="none" stroke="#8a8a8a" stroke-width="2.8"/><path d="M1066.4,10 Q1060.6,17.6 1066.6,25.8 M1078.6,10 Q1084.4,17.6 1078.4,25.8" fill="none" stroke="#f0f0f0" stroke-width="1"/>
<path d="M1072.5,12.6 L1072.5,23" stroke="#8a8a8a" stroke-width="2.4"/>
<circle cx="1066.4" cy="9.8" r="2.6" fill="#7d7d7d"/><circle cx="1078.6" cy="9.8" r="2.6" fill="#7d7d7d"/><circle cx="1066.6" cy="26" r="2.6" fill="#7d7d7d"/><circle cx="1078.6" cy="26" r="2.6" fill="#7d7d7d"/><circle cx="1072.5" cy="12.4" r="2.6" fill="#7d7d7d"/><circle cx="1072.5" cy="23.2" r="2.6" fill="#7d7d7d"/>
<path d="M1096.6,25.4 L1096.6,13 M1096.6,25.4 L1108.6,25.4" stroke="#8a8a8a" stroke-width="3" fill="none"/><path d="M1096.6,7.8 L1100.6,13.6 L1092.6,13.6 Z M1114.2,25.4 L1108.2,29.4 L1108.2,21.4 Z" fill="#8a8a8a"/>
<circle cx="1096.6" cy="25.4" r="2.6" fill="#7d7d7d"/>
<path d="M1102.2,10.2 L1112.6,7.8 L1114.8,17.8 L1104.4,20.2 Z" fill="none" stroke="#9a9a9a" stroke-width="2.2"/><path d="M1102.2,10.2 L1112.6,7.8 L1114.8,17.8 L1104.4,20.2 Z" fill="none" stroke="#f0f0f0" stroke-width="0.8"/>
<rect x="1121" y="1" width="1" height="33" fill="#b4b4b4"/><rect x="1122" y="2" width="1" height="32" fill="#ffffff"/>
<rect x="1125.3" y="4.2" width="1.8" height="1.8" fill="#ffffff"/><rect x="1126.1" y="5" width="1.7" height="1.7" fill="#b4b4b4"/><rect x="1125.3" y="8.2" width="1.8" height="1.8" fill="#ffffff"/><rect x="1126.1" y="9" width="1.7" height="1.7" fill="#b4b4b4"/><rect x="1125.3" y="12.2" width="1.8" height="1.8" fill="#ffffff"/><rect x="1126.1" y="13" width="1.7" height="1.7" fill="#b4b4b4"/><rect x="1125.3" y="16.2" width="1.8" height="1.8" fill="#ffffff"/><rect x="1126.1" y="17" width="1.7" height="1.7" fill="#b4b4b4"/><rect x="1125.3" y="20.2" width="1.8" height="1.8" fill="#ffffff"/><rect x="1126.1" y="21" width="1.7" height="1.7" fill="#b4b4b4"/><rect x="1125.3" y="24.2" width="1.8" height="1.8" fill="#ffffff"/><rect x="1126.1" y="25" width="1.7" height="1.7" fill="#b4b4b4"/><rect x="1125.3" y="28.2" width="1.8" height="1.8" fill="#ffffff"/><rect x="1126.1" y="29" width="1.7" height="1.7" fill="#b4b4b4"/>
<path d="M1139.6,6.8 L1139.6,29.4" stroke="#2a2a2a" stroke-width="1.5" stroke-dasharray="2.4 1.2" fill="none"/>
<path d="M1146.7,6.8 L1146.7,29.4" stroke="#2a2a2a" stroke-width="1.5" stroke-dasharray="2.4 1.2" fill="none"/>
<path d="M1153.8,6.8 L1153.8,29.4" stroke="#2a2a2a" stroke-width="1.5" stroke-dasharray="2.4 1.2" fill="none"/>
<path d="M1135.8,11 L1158,11" stroke="#2a2a2a" stroke-width="1.5" stroke-dasharray="2.4 1.2" fill="none"/>
<path d="M1135.8,18.1 L1158,18.1" stroke="#2a2a2a" stroke-width="1.5" stroke-dasharray="2.4 1.2" fill="none"/>
<path d="M1135.8,25.3 L1158,25.3" stroke="#2a2a2a" stroke-width="1.5" stroke-dasharray="2.4 1.2" fill="none"/>
<path d="M1164.7,15.899999999999999 L1172.1000000000001,15.899999999999999 L1168.4,20.099999999999998 Z" fill="#111"/>
<path d="M1189.6,6.8 L1189.6,29.4" stroke="#444" stroke-width="1.4" stroke-dasharray="2.4 1.4" fill="none"/>
<path d="M1196.7,6.8 L1196.7,29.4" stroke="#444" stroke-width="1.4" stroke-dasharray="2.4 1.4" fill="none"/>
<path d="M1178.8,18.1 L1201,18.1" stroke="#444" stroke-width="1.4" stroke-dasharray="2.4 1.4" fill="none"/>
<path d="M1178.8,25.3 L1201,25.3" stroke="#444" stroke-width="1.4" stroke-dasharray="2.4 1.4" fill="none"/>
<path d="M1182.5,6.8 L1182.5,29.4 M1178.8,11 L1201,11" stroke="#30e030" stroke-width="1.3" stroke-dasharray="2.4 1.4" fill="none"/>
<path d="M1187.2,14.4 L1197.6,27.4 L1194.6,27.6 L1196.4,30 L1194.6,30.4 L1192.6,27.8 L1190,29.4 Z" fill="#d2d4cc" stroke="#9a9a94" stroke-width="0.7"/>
<path d="M1185,14 L1193.4,9.75" stroke="#2a7a00" stroke-width="2.8"/><path d="M1185,14 L1193.4,9.75" stroke="#6cd820" stroke-width="1.3"/>
<circle cx="1185" cy="14" r="2.2" fill="#e21313" stroke="#7a0000" stroke-width="0.8"/><circle cx="1193.4" cy="9.75" r="2.2" fill="#e21313" stroke="#7a0000" stroke-width="0.8"/>
<path d="M1207.55,15.899999999999999 L1214.95,15.899999999999999 L1211.25,20.099999999999998 Z" fill="#111"/>
<rect x="1223.2" y="13.6" width="13.6" height="14" rx="1.6" fill="none" stroke="#8c8c88" stroke-width="2.6"/><rect x="1223.2" y="13.6" width="13.6" height="14" rx="1.6" fill="none" stroke="#f4f4f4" stroke-width="0.9"/>
<circle cx="1236.4" cy="15" r="6.7" fill="none" stroke="#8c8c88" stroke-width="2.6"/><circle cx="1236.4" cy="15" r="6.7" fill="none" stroke="#f4f4f4" stroke-width="0.9"/>
<path d="M1233,18.6 L1233,13.2 A3.6,3.6 0 0 1 1239.6,16.6 L1237,18.6 Z" fill="#a4a4a0"/>
<path d="M1250.7,15.899999999999999 L1258.1000000000001,15.899999999999999 L1254.4,20.099999999999998 Z" fill="#111"/>
</svg>
</body></html>
